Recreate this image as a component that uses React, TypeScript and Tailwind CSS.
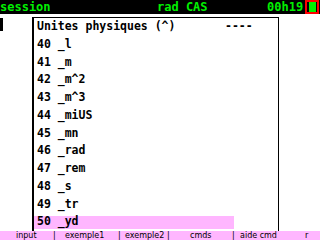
import React from 'react';

const rows = [
  ['40', '_l'],
  ['41', '_m'],
  ['42', '_m^2'],
  ['43', '_m^3'],
  ['44', '_miUS'],
  ['45', '_mn'],
  ['46', '_rad'],
  ['47', '_rem'],
  ['48', '_s'],
  ['49', '_tr'],
  ['50', '_yd'],
];

const mono = { fontFamily: '"DejaVu Sans Mono", "Liberation Mono", monospace' };

export default function App() {
  return (
    <div className="w-[320px] h-[240px] flex flex-col bg-white overflow-hidden select-none">
      {/* status bar */}
      <div
        className="h-[14px] bg-black flex items-center text-[#00f000] font-bold text-[12px] leading-none"
        style={mono}
      >
        <span className="w-[157px]">session</span>
        <span className="w-[110px]">rad CAS</span>
        <span className="w-[38px]">00h19</span>
        <div className="w-[14px] h-[14px] border-2 border-[#ff0000] flex items-center justify-center">
          <div className="w-[7px] h-[10px] bg-[#00f000]" />
        </div>
      </div>

      {/* editor area + popup menu */}
      <div className="flex-1 relative">
        <div className="absolute left-0 top-[4px] w-[3px] h-[13px] bg-black" />
        <div
          className="absolute left-[32px] top-[3px] w-[247px] bottom-0 border-l-2 border-t border-r border-black bg-white text-black font-bold text-[11.5px] leading-none"
          style={mono}
        >
          <div className="h-[17.75px] flex items-center pl-[3px]">
            <span className="w-[188px]">Unites physiques (^)</span>
            <span>----</span>
          </div>
          {rows.map(([n, u], i) => (
            <div key={n} className="h-[17.75px] flex items-center">
              <div
                className={
                  'h-[13px] w-[200px] flex items-center pl-[3px] ' +
                  (i === rows.length - 1 ? 'bg-[#ffb6ff]' : '')
                }
              >
                <span className="whitespace-pre">{n + ' ' + u}</span>
              </div>
            </div>
          ))}
        </div>
      </div>

      {/* function key bar */}
      <div
        className="h-[9px] bg-[#ffb6ff] flex items-center text-black text-[8px] leading-none whitespace-pre"
        style={{ fontFamily: '"DejaVu Sans", "Liberation Sans", sans-serif' }}
      >
        <span className="w-[53px] shrink-0 pl-[16px]">input</span>
        <span className="w-[12px] shrink-0">|</span>
        <span className="w-[53px] shrink-0">exemple1</span>
        <span className="w-[7px] shrink-0">|</span>
        <span className="w-[42px] shrink-0">exemple2</span>
        <span className="w-[23px] shrink-0">|</span>
        <span className="w-[42px] shrink-0">cmds</span>
        <span className="w-[8px] shrink-0">|</span>
        <span className="w-[65px] shrink-0">aide cmd</span>
        <span>r</span>
      </div>
    </div>
  );
}
